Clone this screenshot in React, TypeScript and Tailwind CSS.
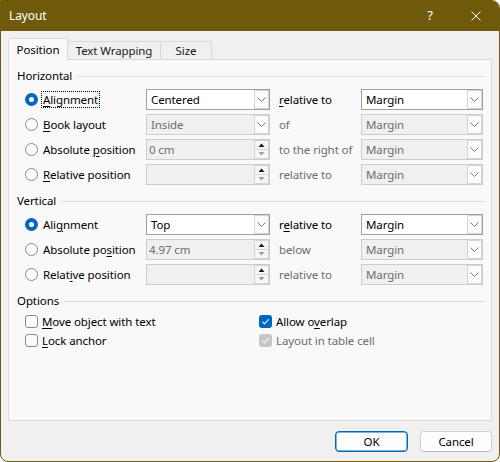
import clsx from "clsx";

// Word "Layout" dialog, Position tab

function Radio({ checked }: { checked?: boolean }) {
  if (checked) {
    return (
      <span className="flex h-[13px] w-[13px] shrink-0 items-center justify-center rounded-full bg-[#0067c0]">
        <span className="h-[5px] w-[5px] rounded-full bg-white" />
      </span>
    );
  }
  return (
    <span className="h-[13px] w-[13px] shrink-0 rounded-full border border-[#8a8a8a] bg-[#fbfbfb]" />
  );
}

function Check({ state }: { state: "off" | "on" | "disabled" }) {
  if (state === "off") {
    return (
      <span className="h-[13px] w-[13px] shrink-0 rounded-[3px] border border-[#8a8a8a] bg-[#fbfbfb]" />
    );
  }
  return (
    <span
      className={clsx(
        "flex h-[13px] w-[13px] shrink-0 items-center justify-center rounded-[3px]",
        state === "on" ? "bg-[#0067c0]" : "bg-[#c6c6c6]"
      )}
    >
      <svg width="9" height="9" viewBox="0 0 9 9">
        <path d="M1.5 4.8 L3.6 6.8 L7.6 2.4" fill="none" stroke="white" strokeWidth="1.1" />
      </svg>
    </span>
  );
}

function Chevron() {
  return (
    <svg width="9" height="5" viewBox="0 0 9 5">
      <path d="M0.5 0.5 L4.5 4.5 L8.5 0.5" fill="none" stroke="#6a6a6a" strokeWidth="0.9" />
    </svg>
  );
}

function Combo({
  value,
  disabled,
  wide,
}: {
  value: string;
  disabled?: boolean;
  wide?: boolean;
}) {
  return (
    <div
      className={clsx(
        "flex h-[21px] shrink-0 border",
        wide ? "w-[124px]" : "w-[122px]",
        disabled
          ? "border-[#cccccc] bg-[#f0f0f0] text-[#6d6d6d]"
          : "border-[#a0a0a0] bg-white text-black"
      )}
    >
      <span className="flex-1 pl-[4px] leading-[19px]">{value}</span>
      <span className="flex w-[15px] items-center justify-center border border-[#d4d4d4] bg-[#fcfcfc]">
        <Chevron />
      </span>
    </div>
  );
}

function Spinner({ value }: { value: string }) {
  return (
    <div className="flex h-[21px] w-[124px] shrink-0 border border-[#cccccc] bg-[#f0f0f0] text-[#6d6d6d]">
      <span className="flex-1 pl-[2px] leading-[19px]">{value}</span>
      <span className="flex w-[15px] flex-col border border-[#d4d4d4] bg-[#f7f7f7]">
        <span className="flex flex-1 items-center justify-center border-b border-[#d4d4d4]">
          <svg width="7" height="4" viewBox="0 0 7 4">
            <path d="M0.5 4 L3.5 0.5 L6.5 4 Z" fill="#1a1a1a" />
          </svg>
        </span>
        <span className="flex flex-1 items-center justify-center">
          <svg width="7" height="4" viewBox="0 0 7 4">
            <path d="M0.5 0 L3.5 3.5 L6.5 0 Z" fill="#a0a0a0" />
          </svg>
        </span>
      </span>
    </div>
  );
}

function GroupHeader({ title }: { title: string }) {
  return (
    <div className="flex h-[16px] items-center">
      <span className="leading-[16px]">{title}</span>
      <span className="ml-[5px] h-px flex-1 bg-[#dcdcdc]" />
    </div>
  );
}

function Key({ children }: { children: string }) {
  return <span className="underline underline-offset-[2px]">{children}</span>;
}

interface PosRow {
  label: React.ReactNode;
  checked?: boolean;
  focus?: boolean;
  field: React.ReactNode;
  relLabel: React.ReactNode;
  relDisabled?: boolean;
  relValue: string;
}

function Row({ row }: { row: PosRow }) {
  return (
    <div className="flex h-[21px] items-center">
      <div className="ml-[8px] flex w-[121px] items-center gap-[3px]">
        <Radio checked={row.checked} />
        <span
          className={clsx(
            "whitespace-nowrap leading-[15px]",
            row.focus ? "border border-dotted border-black px-px" : "border border-transparent px-px"
          )}
        >
          {row.label}
        </span>
      </div>
      {row.field}
      <span
        className={clsx(
          "ml-[9px] w-[82px] whitespace-nowrap",
          row.relDisabled ? "text-[#6d6d6d]" : "text-black"
        )}
      >
        {row.relLabel}
      </span>
      <Combo value={row.relValue} disabled={row.relDisabled} />
    </div>
  );
}

export default function App() {
  const horizontal: PosRow[] = [
    {
      label: (
        <>
          <Key>A</Key>lignment
        </>
      ),
      checked: true,
      focus: true,
      field: <Combo value="Centered" wide />,
      relLabel: (
        <>
          <Key>r</Key>elative to
        </>
      ),
      relValue: "Margin",
    },
    {
      label: (
        <>
          <Key>B</Key>ook layout
        </>
      ),
      field: <Combo value="Inside" wide disabled />,
      relLabel: "of",
      relDisabled: true,
      relValue: "Margin",
    },
    {
      label: (
        <>
          Absolute <Key>p</Key>osition
        </>
      ),
      field: <Spinner value="0 cm" />,
      relLabel: "to the right of",
      relDisabled: true,
      relValue: "Margin",
    },
    {
      label: (
        <>
          <Key>R</Key>elative position
        </>
      ),
      field: <Spinner value="" />,
      relLabel: "relative to",
      relDisabled: true,
      relValue: "Margin",
    },
  ];

  const vertical: PosRow[] = [
    {
      label: (
        <>
          Ali<Key>g</Key>nment
        </>
      ),
      checked: true,
      field: <Combo value="Top" wide />,
      relLabel: (
        <>
          r<Key>e</Key>lative to
        </>
      ),
      relValue: "Margin",
    },
    {
      label: (
        <>
          Absolute po<Key>s</Key>ition
        </>
      ),
      field: <Spinner value="4.97 cm" />,
      relLabel: "below",
      relDisabled: true,
      relValue: "Margin",
    },
    {
      label: (
        <>
          Relat<Key>i</Key>ve position
        </>
      ),
      field: <Spinner value="" />,
      relLabel: "relative to",
      relDisabled: true,
      relValue: "Margin",
    },
  ];

  return (
    <div className="h-[462px] w-[500px] bg-white font-['Noto_Sans',sans-serif] text-[11.5px] tracking-[-0.1px] text-black">
      <div className="flex h-full flex-col overflow-hidden rounded-lg rounded-tl-none border border-[#6e5a0a] bg-[#f0f0f0]">
        {/* title bar */}
        <div className="flex h-[30px] shrink-0 items-center bg-[#6e5a0a] text-white">
          <span className="flex-1 pl-[8px] text-[12px]">Layout</span>
          <span className="flex w-[46px] items-center justify-center text-[13px]">?</span>
          <span className="flex w-[46px] items-center justify-center">
            <svg width="10" height="10" viewBox="0 0 10 10">
              <path d="M0.5 0.5 L9.5 9.5 M9.5 0.5 L0.5 9.5" stroke="white" strokeWidth="1" />
            </svg>
          </span>
        </div>

        <div className="flex flex-1 flex-col pb-[9px] pl-[7px] pr-[7px] pt-[7px]">
          {/* tabs */}
          <div className="relative z-10 flex h-[21px] items-end">
            <div className="-mb-px flex h-[22px] w-[60px] justify-center border border-b-0 border-[#d9d9d9] bg-[#f9f9f9] pt-[3px] leading-[16px]">
              Position
            </div>
            <div className="flex h-[18px] w-[93px] justify-center border-r border-t border-[#d9d9d9] bg-[#f0f0f0] pt-[1px] leading-[16px] text-[#1a1a1a]">
              Text Wrapping
            </div>
            <div className="flex h-[18px] w-[51px] justify-center border-r border-t border-[#d9d9d9] bg-[#f0f0f0] pt-[1px] leading-[16px] text-[#1a1a1a]">
              Size
            </div>
          </div>

          {/* panel */}
          <div className="flex flex-1 flex-col border border-[#d9d9d9] bg-[#f9f9f9] pl-[8px] pr-[6px] pt-[8px]">
            <GroupHeader title="Horizontal" />
            <div className="mt-[5px] flex flex-col gap-[4px]">
              {horizontal.map((row, i) => (
                <Row key={i} row={row} />
              ))}
            </div>

            <div className="mt-[8px]">
              <GroupHeader title="Vertical" />
            </div>
            <div className="mt-[5px] flex flex-col gap-[4px]">
              {vertical.map((row, i) => (
                <Row key={i} row={row} />
              ))}
            </div>

            <div className="mt-[8px]">
              <GroupHeader title="Options" />
            </div>
            <div className="mt-[3px] flex flex-col">
              <div className="flex h-[19px] items-center">
                <div className="ml-[8px] flex w-[234px] items-center gap-[4px]">
                  <Check state="off" />
                  <span>
                    <Key>M</Key>ove object with text
                  </span>
                </div>
                <div className="flex items-center gap-[4px]">
                  <Check state="on" />
                  <span>
                    Allow o<Key>v</Key>erlap
                  </span>
                </div>
              </div>
              <div className="flex h-[19px] items-center">
                <div className="ml-[8px] flex w-[234px] items-center gap-[4px]">
                  <Check state="off" />
                  <span>
                    <Key>L</Key>ock anchor
                  </span>
                </div>
                <div className="flex items-center gap-[4px]">
                  <Check state="disabled" />
                  <span className="text-[#6d6d6d]">Layout in table cell</span>
                </div>
              </div>
            </div>
          </div>

          {/* buttons */}
          <div className="mt-[10px] flex h-[21px] justify-end gap-[12px]">
            <button className="h-[21px] w-[73px] rounded-[4px] border border-[#0067c0] bg-[#fdfdfd] leading-[19px] shadow-[inset_0_0_0_0.5px_#0067c0]">
              OK
            </button>
            <button className="h-[21px] w-[72px] rounded-[4px] border border-[#d0d0d0] border-b-[#b8b8b8] bg-[#fdfdfd] leading-[19px]">
              Cancel
            </button>
          </div>
        </div>
      </div>
    </div>
  );
}
